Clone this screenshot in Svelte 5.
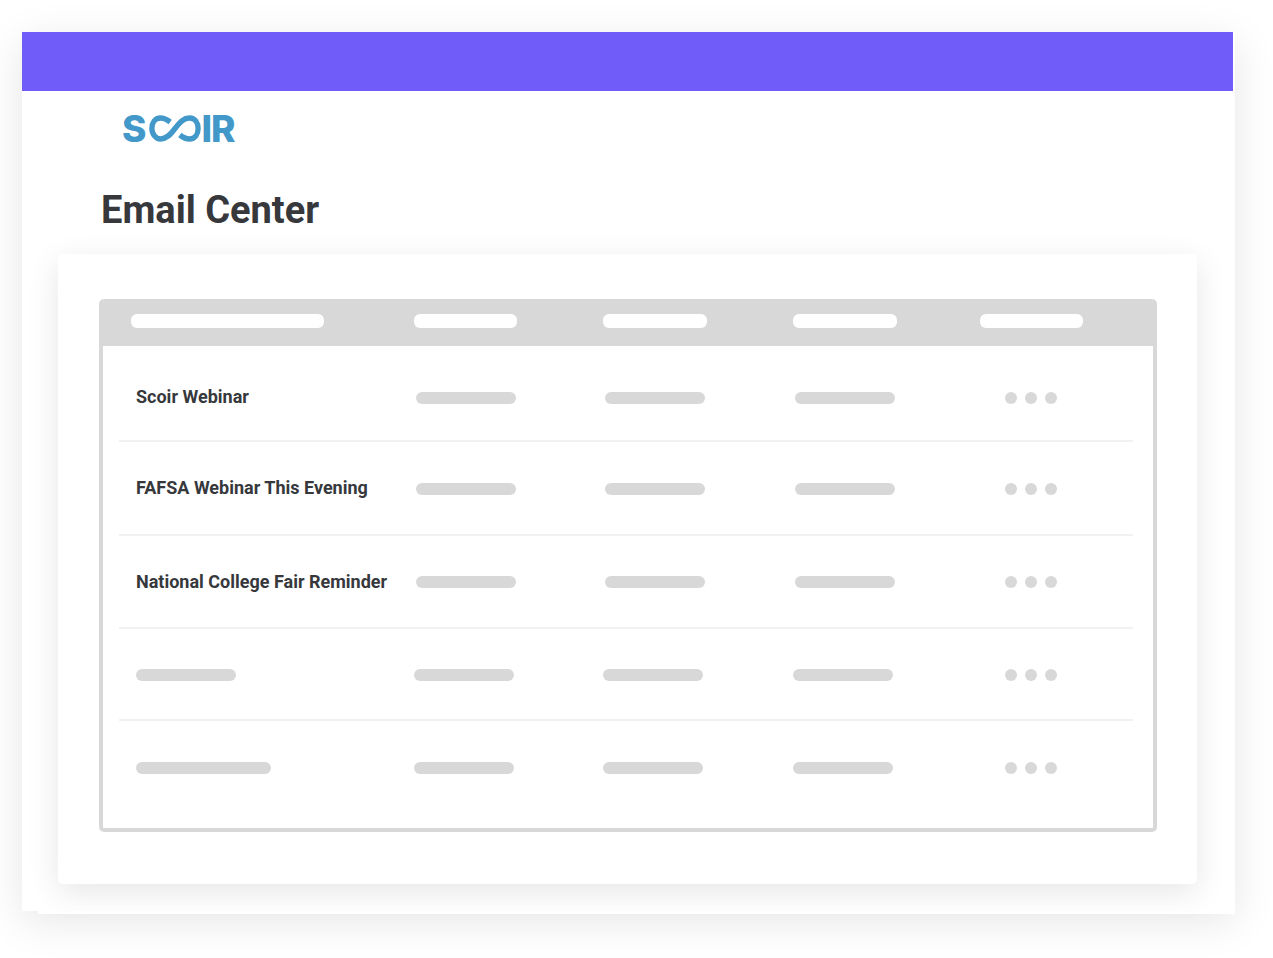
<script>
  const heads = [193, 103, 104, 104, 103];
  const rows = [
    { title: 'Scoir Webinar' },
    { title: 'FAFSA Webinar This Evening' },
    { title: 'National College Fair Reminder' },
    { bar: 100 },
    { bar: 135 }
  ];
</script>

<div class="frame">
  <div class="band"></div>
  <div class="logo">
    <span>S</span>
    <svg class="inf" width="52" height="27" viewBox="0 0 54 27" preserveAspectRatio="none" aria-hidden="true">
      <path d="M22 7C18 4 15 3 12 3C6 3 3 8 3 13.5C3 19 7 24 12 24C18 24 22 20 27 13.5C32 7 36 3 42 3C48 3 51 8 51 13.5C51 19 48 24 42 24C39 24 36 23 32 20" fill="none" stroke="#4298c9" stroke-width="5.5"/>
    </svg>
    <span class="ir">IR</span>
  </div>
  <h1>Email Center</h1>
  <div class="card">
    <div class="table">
      <div class="thead">
        {#each heads as w}
          <div class="hcell"><i class="hpill" style="width:{w}px"></i></div>
        {/each}
      </div>
      {#each rows as r}
        <div class="row" class:skeleton={r.bar}>
          {#if r.title}
            <div class="title">{r.title}</div>
          {:else}
            <div class="title"><i class="pill" style="width:{r.bar}px"></i></div>
          {/if}
          <div><i class="pill"></i></div>
          <div><i class="pill"></i></div>
          <div><i class="pill"></i></div>
          <div class="dots"><i></i><i></i><i></i></div>
        </div>
      {/each}
    </div>
  </div>
  <div class="notch"></div>
</div>

<style>
  :global(body) {
    margin: 0;
    background: #fff;
    font-family: Roboto, "Liberation Sans", sans-serif;
  }
  .frame {
    position: relative;
    box-sizing: border-box;
    width: 1213px;
    height: 879px;
    margin: 32px 0 47px 22px;
    background: #fff;
    box-shadow: 0 10px 40px rgba(0, 0, 0, 0.1);
  }
  .notch {
    position: absolute;
    left: 16px;
    right: 0;
    bottom: -3px;
    height: 3px;
    background: #fff;
  }
  .band {
    width: 1211px;
    height: 59px;
    background: #705cf9;
  }
  .logo {
    display: flex;
    align-items: center;
    height: 27px;
    margin: 24px 0 0 100px;
    color: #4298c9;
    font-family: Inter, sans-serif;
    font-weight: 800;
    font-size: 37px;
    line-height: 27px;
  }
  .inf { margin-left: 3px; flex: none; }
  .ir { letter-spacing: -1px; }
  h1 {
    margin: 47px 0 0 79px;
    height: 43px;
    color: #36383c;
    font-size: 38px;
    line-height: 43px;
    font-weight: 700;
  }
  .card {
    box-sizing: border-box;
    width: 1139px;
    height: 630px;
    margin: 22px 0 0 36px;
    padding: 45px 40px 0 41px;
    background: #fff;
    border-radius: 5px;
    box-shadow: 0 8px 32px rgba(0, 0, 0, 0.1);
  }
  .table {
    box-sizing: border-box;
    width: 1058px;
    height: 533px;
    border: solid #d8d8d8;
    border-width: 0 4px 4px;
    border-radius: 5px;
    overflow: hidden;
  }
  .thead {
    display: grid;
    grid-template-columns: 283px 189px 190px 187px 1fr;
    align-items: center;
    height: 47px;
    margin: 0 -4px;
    padding: 0 0 4px 32px;
    box-sizing: border-box;
    background: #d8d8d8;
  }
  .hcell { display: flex; }
  .hpill {
    display: block;
    height: 14px;
    border-radius: 6px;
    background: #fff;
  }
  .row {
    display: grid;
    grid-template-columns: 280px 189px 190px 210px 1fr;
    align-items: center;
    box-sizing: border-box;
    height: 92px;
    margin: 0 20px 0 16px;
    padding-left: 17px;
    border-bottom: 2px solid #f2f2f2;
  }
  .row:nth-child(2) { height: 96px; padding-top: 10px; }
  .row:nth-child(3) { height: 94px; padding-top: 2px; }
  .row:nth-child(4) { height: 93px; }
  .row:nth-child(5) { height: 92px; padding-top: 2px; }
  .row:nth-child(6) { padding-top: 2px; border-bottom: 0; }
  .row.skeleton { grid-template-columns: 278px 189px 190px 212px 1fr; }
  .title {
    color: #36383c;
    font-size: 18px;
    line-height: 22px;
    font-weight: 700;
    white-space: nowrap;
    display: flex;
    position: relative;
    top: -1px;
  }
  .row:nth-child(4) .title,
  .row.skeleton .title { top: 0; }
  .pill {
    display: block;
    width: 100px;
    height: 12px;
    border-radius: 6px;
    background: #d8d8d8;
  }
  .dots { display: flex; gap: 8px; }
  .dots i {
    display: block;
    width: 12px;
    height: 12px;
    border-radius: 50%;
    background: #d8d8d8;
  }
</style>
